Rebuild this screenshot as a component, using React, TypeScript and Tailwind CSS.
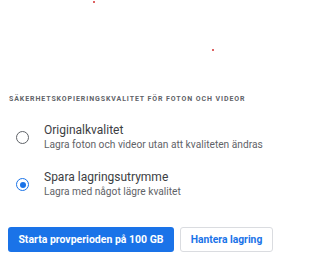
import React from "react";

function Radio({ checked }: { checked: boolean }) {
  return checked ? (
    <span className="flex h-[13px] w-[13px] items-center justify-center rounded-full border-[1.5px] border-[#1a73e8]">
      <span className="h-[6px] w-[6px] rounded-full bg-[#1a73e8]" />
    </span>
  ) : (
    <span className="h-[13px] w-[13px] rounded-full border-[1.5px] border-[#5f6368]" />
  );
}

function Option({ checked, title, sub }: { checked: boolean; title: string; sub: string }) {
  return (
    <div className="flex items-center">
      <div className="flex w-[44px] justify-center pl-[7px] pr-[6px]">
        <Radio checked={checked} />
      </div>
      <div className="flex flex-col">
        <span className="text-[12px] leading-[15px] text-[#3c4043]">{title}</span>
        <span className="text-[10.2px] leading-[14px] text-[#5f6368]">{sub}</span>
      </div>
    </div>
  );
}

export default function App() {
  return (
    <div
      className="relative h-[263px] w-[300px] overflow-hidden bg-white"
      style={{ fontFamily: "Roboto, 'Liberation Sans', sans-serif" }}
    >
      <span className="absolute left-[93px] top-[1px] h-[2px] w-[2px] rounded-full bg-[#d32f2f]" />
      <span className="absolute left-[212px] top-[49px] h-[2px] w-[2px] rounded-full bg-[#d32f2f]" />
      <div className="flex flex-col pt-[95px]">
        <div className="pl-[9px] text-[7px] font-bold uppercase leading-[8px] tracking-[0.13em] text-[#5f6368]">
          Säkerhetskopieringskvalitet för foton och videor
        </div>
        <div className="mt-[20px] flex flex-col gap-[18px]">
          <Option
            checked={false}
            title="Originalkvalitet"
            sub="Lagra foton och videor utan att kvaliteten ändras"
          />
          <Option
            checked={true}
            title="Spara lagringsutrymme"
            sub="Lagra med något lägre kvalitet"
          />
        </div>
        <div className="mt-[28px] flex gap-[6px] pl-[8px]">
          <button className="h-[25px] w-[166px] rounded-[3px] bg-[#1a73e8] text-[10.5px] font-bold text-white">
            Starta provperioden på 100 GB
          </button>
          <button className="h-[25px] w-[93px] rounded-[3px] border border-[#dadce0] bg-white text-[10.3px] font-bold text-[#1a73e8]">
            Hantera lagring
          </button>
        </div>
      </div>
    </div>
  );
}
